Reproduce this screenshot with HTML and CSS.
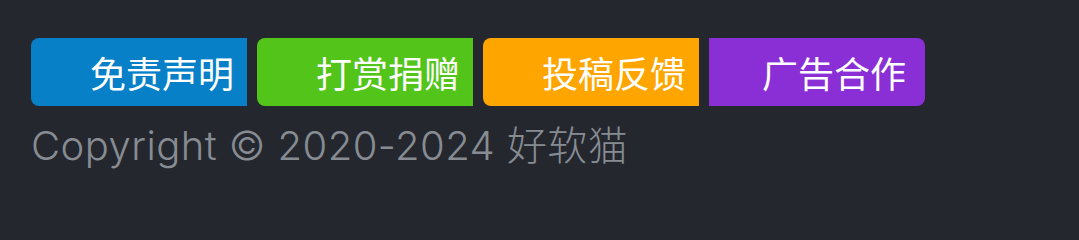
FILE: index.html
```html
<!DOCTYPE html>
<html lang="zh-CN">
<head>
<meta charset="utf-8">
<title>Footer</title>
<link rel="stylesheet" href="styles.css">
</head>
<body>
<footer class="footer">
  <nav class="links">
    <a class="badge badge-blue" href="#">免责声明</a>
    <a class="badge badge-green" href="#">打赏捐赠</a>
    <a class="badge badge-orange" href="#">投稿反馈</a>
    <a class="badge badge-purple" href="#">广告合作</a>
  </nav>
  <p class="copyright">Copyright © 2020-2024 好软猫</p>
</footer>
</body>
</html>
```
FILE: styles.css
```css
html, body {
  margin: 0;
  padding: 0;
  background: #24272e;
}
.footer {
  padding: 38px 31px 0;
  font-family: Inter, "Noto Sans CJK SC", sans-serif;
}
.links {
  display: flex;
  gap: 10px;
}
.badge {
  box-sizing: border-box;
  width: 216px;
  height: 68px;
  display: flex;
  align-items: center;
  justify-content: flex-end;
  padding-right: 13px;
  color: #ffffff;
  text-decoration: none;
  font-family: "Noto Sans CJK SC", sans-serif;
  font-size: 36px;
  line-height: 1;
  border-radius: 8px 0 0 8px;
}
.badge-blue { background: #0780c8; }
.badge-green { background: #52c41a; }
.badge-orange { background: #ffa500; }
.badge-purple {
  background: #8a2fd6;
  border-radius: 0 8px 8px 0;
  padding-right: 19px;
}
.copyright {
  margin: 16px 0 0;
  color: #878c93;
  font-size: 40px;
  font-weight: 300;
  letter-spacing: 0.45px;
  line-height: 48px;
  white-space: nowrap;
}
```
